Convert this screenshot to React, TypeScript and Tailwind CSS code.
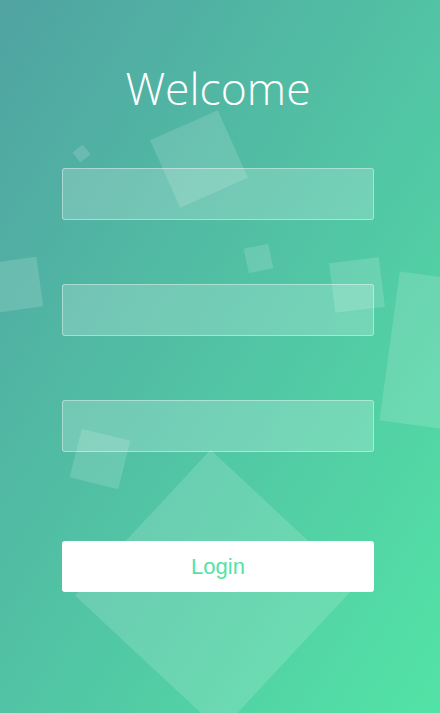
import React from "react";

type Sq = { cx: number; cy: number; w: number; h?: number; r: number };

const squares: Sq[] = [
  { cx: 81.5, cy: 153.5, w: 13, r: -38 },
  { cx: 198.5, cy: 158.5, w: 74, r: -24 },
  { cx: 15, cy: 285, w: 50, r: -8 },
  { cx: 258, cy: 258, w: 25, r: -12 },
  { cx: 357, cy: 285, w: 50, r: -7 },
  { cx: 464, cy: 356, w: 150, r: 7.8 },
  { cx: 100, cy: 459, w: 50, r: 14 },
  { cx: 215, cy: 590, w: 199, r: 43 },
];

export default function App() {
  return (
    <div className="relative w-full h-[713px] overflow-hidden bg-[linear-gradient(to_bottom_right,#50a3a2,#53e3a6)]">
      {squares.map((s, i) => (
        <div
          key={i}
          className="absolute bg-white/15"
          style={{
            left: s.cx - s.w / 2,
            top: s.cy - (s.h ?? s.w) / 2,
            width: s.w,
            height: s.h ?? s.w,
            transform: `rotate(${s.r}deg)`,
          }}
        />
      ))}
      <div className="relative z-10 flex flex-col items-center pt-[58px] pr-[4px]">
        <h1
          className="text-white text-[44.5px] leading-[60px] font-light text-center"
          style={{ fontFamily: '"Open Sans", "Noto Sans", sans-serif' }}
        >
          Welcome
        </h1>
        <div className="mt-[50px] flex flex-col gap-[64px]">
          <input className="w-[312px] h-[52px] rounded-[3px] border border-white/40 bg-white/20 outline-none" />
          <input className="w-[312px] h-[52px] rounded-[3px] border border-white/40 bg-white/20 outline-none" />
          <input className="w-[312px] h-[52px] rounded-[3px] border border-white/40 bg-white/20 outline-none" />
        </div>
        <button
          className="mt-[89px] w-[312px] h-[51px] rounded-[3px] bg-white text-[#53e3a6] text-[22px]"
          style={{ fontFamily: '"Liberation Sans", Arial, sans-serif' }}
        >
          Login
        </button>
      </div>
    </div>
  );
}
